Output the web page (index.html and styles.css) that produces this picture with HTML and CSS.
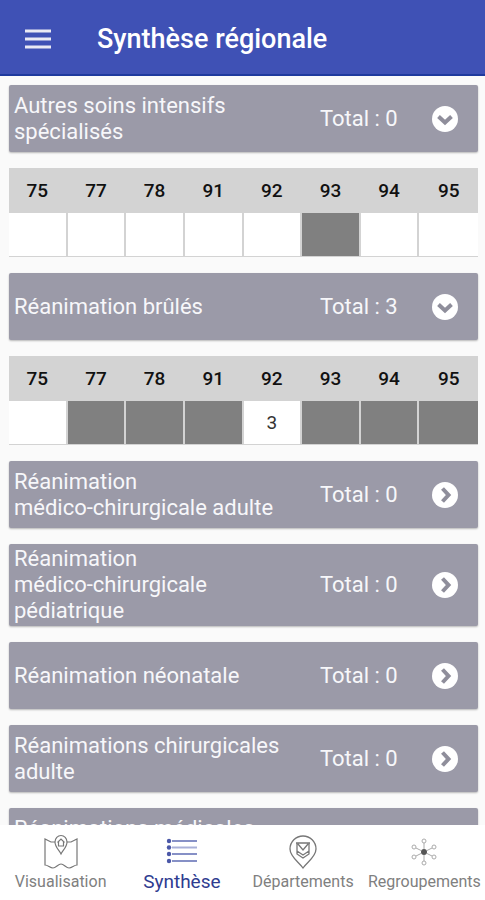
FILE: index.html
```html
<!DOCTYPE html>
<html lang="fr">
<head>
<meta charset="utf-8">
<meta name="viewport" content="width=device-width, initial-scale=1">
<title>Synthèse régionale</title>
<link rel="stylesheet" href="styles.css">
</head>
<body>
<svg class="sprite" aria-hidden="true">
  <symbol id="chevron-down" viewBox="0 0 26 26">
    <circle cx="13" cy="13" r="13" fill="#fff"/>
    <path d="M6.500 10.500l6.500 6 6.500-6" fill="none" stroke="#8f8e9b" stroke-width="4"/>
  </symbol>
  <symbol id="chevron-right" viewBox="0 0 26 26">
    <circle cx="13" cy="13" r="13" fill="#fff"/>
    <path d="M10.500 6.500l6 6.500-6 6.500" fill="none" stroke="#8f8e9b" stroke-width="4"/>
  </symbol>
</svg>
<header class="app-bar">
  <button class="menu" type="button" aria-label="Menu">
    <svg width="26" height="20" viewBox="0 0 26 20"><path d="M0 2h26M0 10h26M0 18h26" stroke="#e9e9f4" stroke-width="3"/></svg>
  </button>
  <h1>Synthèse régionale</h1>
</header>
<main class="content">
  <button class="card" type="button" aria-expanded="true">
    <span class="name">Autres soins intensifs spécialisés</span>
    <span class="total">Total : 0</span>
    <svg class="chevron"><use href="#chevron-down"/></svg>
  </button>
  <table class="beds">
    <thead><tr><th>75</th><th>77</th><th>78</th><th>91</th><th>92</th><th>93</th><th>94</th><th>95</th></tr></thead>
    <tbody><tr><td></td><td></td><td></td><td></td><td></td><td class="none"></td><td></td><td></td></tr></tbody>
  </table>
  <button class="card" type="button" aria-expanded="true">
    <span class="name">Réanimation brûlés</span>
    <span class="total">Total : 3</span>
    <svg class="chevron"><use href="#chevron-down"/></svg>
  </button>
  <table class="beds">
    <thead><tr><th>75</th><th>77</th><th>78</th><th>91</th><th>92</th><th>93</th><th>94</th><th>95</th></tr></thead>
    <tbody><tr><td></td><td class="none"></td><td class="none"></td><td class="none"></td><td>3</td><td class="none"></td><td class="none"></td><td class="none"></td></tr></tbody>
  </table>
  <button class="card" type="button" aria-expanded="false">
    <span class="name">Réanimation <span class="keep">médico-chirurgicale</span> adulte</span>
    <span class="total">Total : 0</span>
    <svg class="chevron"><use href="#chevron-right"/></svg>
  </button>
  <button class="card" type="button" aria-expanded="false">
    <span class="name">Réanimation <span class="keep">médico-chirurgicale</span> pédiatrique</span>
    <span class="total">Total : 0</span>
    <svg class="chevron"><use href="#chevron-right"/></svg>
  </button>
  <button class="card" type="button" aria-expanded="false">
    <span class="name">Réanimation néonatale</span>
    <span class="total">Total : 0</span>
    <svg class="chevron"><use href="#chevron-right"/></svg>
  </button>
  <button class="card" type="button" aria-expanded="false">
    <span class="name">Réanimations chirurgicales adulte</span>
    <span class="total">Total : 0</span>
    <svg class="chevron"><use href="#chevron-right"/></svg>
  </button>
  <button class="card" type="button" aria-expanded="false">
    <span class="name">Réanimations médicales adulte</span>
    <span class="total">Total : 0</span>
    <svg class="chevron"><use href="#chevron-right"/></svg>
  </button>
</main>
<nav class="tabs">
  <a href="#visualisation">
    <svg width="36" height="36" viewBox="0 0 36 36" fill="none" stroke="#777" stroke-width="1.200">
      <path d="M12 8H8L2 5v26c3 0 5 3 8 3s5-4 8-4 5 4 8 4 5-3 8-3V5l-6 3h-4"/>
      <path d="M18 20c-2-4-6-7-6-12a6 6.500 0 0 1 12 0c0 5-4 8-6 12z"/>
      <path d="M14.500 8.500L18 5l3.500 3.500M15.500 8v4h5V8"/>
    </svg>
    <span>Visualisation</span>
  </a>
  <a class="active" href="#synthese" aria-current="page">
    <svg width="36" height="36" viewBox="0 0 36 36" fill="#4b58a8" stroke="#5f6cb4" stroke-width="1.500">
      <path d="M8 7h25M8 20h25M8 27h25"/>
      <path d="M8 13.500h25" stroke="#a9b0d8" stroke-width="2"/>
      <g stroke="none"><circle cx="5" cy="7" r="2.200"/><circle cx="5" cy="13.500" r="2.200"/><circle cx="5" cy="20" r="2.200"/><circle cx="5" cy="27" r="2.200"/></g>
    </svg>
    <span>Synthèse</span>
  </a>
  <a href="#departements">
    <svg width="36" height="36" viewBox="0 0 36 36" fill="none" stroke="#777" stroke-width="1.300">
      <path d="M18 34C14 28 5 23 5 15a13 13 0 0 1 26 0c0 8-9 13-13 19z"/>
      <path d="M11 9h14M12 9v8l6 4 6-4V9M13 10l5 6 5-6M12 17v3l6 4 6-4v-3"/>
    </svg>
    <span>Départements</span>
  </a>
  <a href="#regroupements">
    <svg width="36" height="36" viewBox="0 0 36 36" fill="none" stroke="#aaa" stroke-width="1">
      <path d="M18 9v6M18 21v6M10 14l5 2.500M26 14l-5 2.500M10 22l5-2.500M26 22l-5-2.500"/>
      <circle cx="18" cy="7" r="2"/><circle cx="18" cy="29" r="2"/><circle cx="8" cy="13" r="2"/><circle cx="28" cy="13" r="2"/><circle cx="8" cy="23" r="2"/><circle cx="28" cy="23" r="2"/>
      <circle cx="18" cy="18" r="3" fill="#555" stroke="none"/>
    </svg>
    <span>Regroupements</span>
  </a>
</nav>
</body>
</html>
```
FILE: styles.css
```css
* {
  box-sizing: border-box;
}

body {
  display: flex;
  flex-direction: column;
  height: 100vh;
  margin: 0;
  background: #fafafa;
  font-family: Roboto, "Liberation Sans", sans-serif;
}

.sprite {
  display: none;
}

.app-bar {
  display: flex;
  flex: none;
  align-items: center;
  gap: 34px;
  height: 76px;
  padding: 4px 13px 0;
  background: #3f51b5;
  border-bottom: 2px solid #1f3a9e;
  color: #fff;
}

.menu {
  display: flex;
  padding: 12px;
  background: none;
  border: 0;
}

h1 {
  margin: 0;
  font-size: 27px;
  font-weight: 500;
  line-height: 32px;
}

.content {
  display: flex;
  flex: 1;
  flex-direction: column;
  gap: 16px;
  min-height: 0;
  padding: 9px 7px 16px 9px;
  overflow-y: auto;
  scrollbar-width: none;
}

.card {
  display: grid;
  flex: none;
  grid-template-columns: 1fr 112px 46px;
  align-items: center;
  min-height: 67px;
  padding: 2px 0 2px 5px;
  background: #9b9aa8;
  border: 0;
  border-radius: 2px;
  box-shadow: 0 1px 2px #0004;
  color: #f7f7fa;
  font: 22px/26px Roboto, "Liberation Sans", sans-serif;
  text-align: left;
}

.name {
  max-width: 276px;
}

.keep {
  white-space: nowrap;
}

.chevron {
  width: 26px;
  height: 26px;
}

.beds {
  flex: none;
  width: 100%;
  border-collapse: separate;
  border-spacing: 0;
  table-layout: fixed;
  color: #111;
  font-size: 19px;
  line-height: 24px;
  text-align: center;
}

.beds th {
  height: 45px;
  padding: 0;
  background: #d3d3d3;
  border-right: 2px solid #d3d3d3;
  font-weight: 500;
}

.beds td {
  height: 44px;
  padding: 0;
  background: #fff;
  border: solid #d3d3d3;
  border-width: 0 2px 1px 0;
  color: #333;
}

.beds th:last-child,
.beds td:last-child {
  border-right: 0;
}

.beds .none {
  background: #808080;
}

.tabs {
  display: grid;
  flex: none;
  grid-template-columns: repeat(4, 1fr);
  height: 75px;
  padding-top: 9px;
  background: #fff;
}

.tabs a {
  display: flex;
  flex-direction: column;
  align-items: center;
  gap: 1px;
  color: #808080;
  font-size: 16px;
  line-height: 22px;
  text-decoration: none;
}

.tabs .active {
  color: #2f3c90;
  font-size: 19px;
}
```
